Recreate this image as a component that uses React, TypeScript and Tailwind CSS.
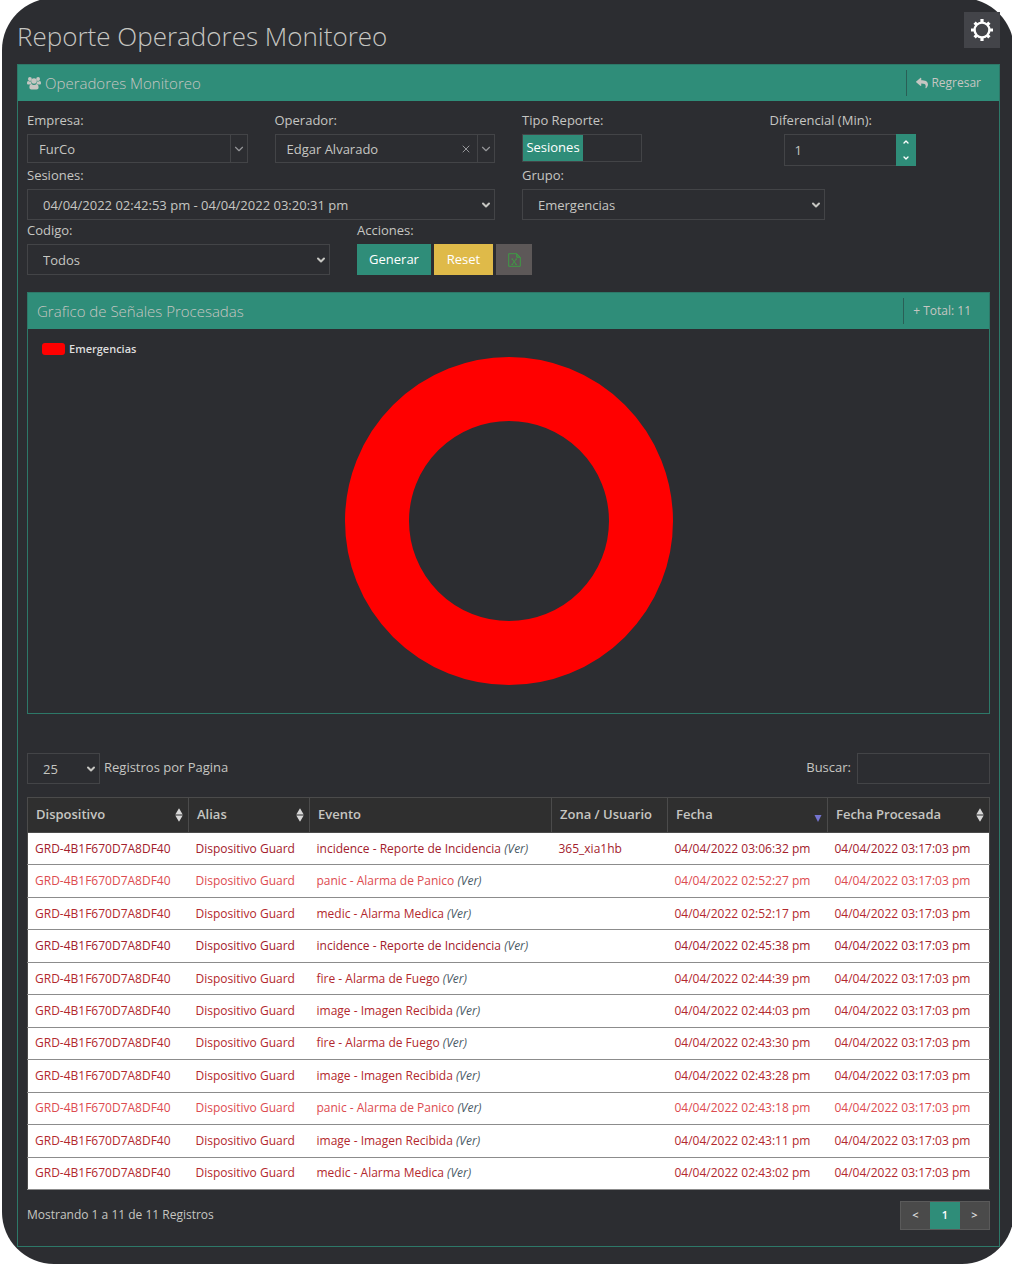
import { useState } from "react"
import type { ReactNode } from "react"
import { ChevronDown, ChevronUp, X } from "lucide-react"
import { FaReply } from "react-icons/fa"

interface Registro {
  evento: string
  zona?: string
  fecha: string
  tono: "oscuro" | "medio" | "claro"
}

const DISPOSITIVO = "GRD-4B1F670D7A8DF40"
const ALIAS = "Dispositivo Guard"
const PROCESADA = "04/04/2022 03:17:03 pm"

const registros: Registro[] = [
  { evento: "incidence - Reporte de Incidencia", zona: "365_xia1hb", fecha: "04/04/2022 03:06:32 pm", tono: "oscuro" },
  { evento: "panic - Alarma de Panico", fecha: "04/04/2022 02:52:27 pm", tono: "claro" },
  { evento: "medic - Alarma Medica", fecha: "04/04/2022 02:52:17 pm", tono: "medio" },
  { evento: "incidence - Reporte de Incidencia", fecha: "04/04/2022 02:45:38 pm", tono: "oscuro" },
  { evento: "fire - Alarma de Fuego", fecha: "04/04/2022 02:44:39 pm", tono: "medio" },
  { evento: "image - Imagen Recibida", fecha: "04/04/2022 02:44:03 pm", tono: "medio" },
  { evento: "fire - Alarma de Fuego", fecha: "04/04/2022 02:43:30 pm", tono: "medio" },
  { evento: "image - Imagen Recibida", fecha: "04/04/2022 02:43:28 pm", tono: "medio" },
  { evento: "panic - Alarma de Panico", fecha: "04/04/2022 02:43:18 pm", tono: "claro" },
  { evento: "image - Imagen Recibida", fecha: "04/04/2022 02:43:11 pm", tono: "medio" },
  { evento: "medic - Alarma Medica", fecha: "04/04/2022 02:43:02 pm", tono: "medio" },
]

const tonos = {
  oscuro: "text-[#a3202c]",
  medio: "text-[#b3282d]",
  claro: "text-[#dd4b4f]",
}

function GearIcon() {
  return (
    <svg viewBox="0 0 24 24" className="size-6" fill="none" stroke="currentColor" aria-hidden="true">
      <circle cx="12" cy="12" r="7.4" strokeWidth="2.4" />
      <g strokeWidth="3.2">
        <path d="M12 1v3.6M12 19.4V23M1 12h3.6M19.4 12H23" />
        <path d="M4.6 4.6l2 2M17.4 17.4l2 2M19.4 4.6l-2 2M6.6 17.4l-2 2" />
      </g>
    </svg>
  )
}

function UsersIcon() {
  return (
    <svg viewBox="0 0 14 13" className="h-[13px] w-[14px]" fill="currentColor" aria-hidden="true">
      <circle cx="2.9" cy="2" r="1.9" />
      <circle cx="11.1" cy="2" r="1.9" />
      <circle cx="7" cy="4" r="2.8" />
      <path d="M0 6.2C0 4.8.5 4 1.2 4c.6.5 1.9.6 2.6.2 0 1 .3 1.8.9 2.5-.9 0-1.6.3-2.1.9H1.3C.5 7.600 0 7 0 6.200z" />
      <path d="M14 6.200C14 4.800 13.500 4 12.800 4c-.6.5-1.900.6-2.600.2 0 1-.3 1.800-.9 2.500.9 0 1.600.3 2.100.9h1.300c.8 0 1.300-.6 1.300-1.400z" />
      <path d="M2.400 10.600c0-2.200.6-3.700 2-3.700.8.7 1.700 1 2.600 1s1.800-.3 2.600-1c1.400 0 2 1.500 2 3.700 0 1.300-.8 2-2 2H4.400c-1.200 0-2-.7-2-2z" />
    </svg>
  )
}

function ExcelIcon() {
  return (
    <svg viewBox="0 0 13 14" className="h-[14px] w-[13px]" fill="none" stroke="currentColor" aria-hidden="true">
      <path d="M.7.7h8l3.600 3.600v9H.7z" />
      <path d="M8.700.7l3.600 3.600H8.700z" fill="currentColor" fillOpacity=".5" />
      <path d="M4.300 6l3.800 5.400M8.300 6l-4 5.400M3.500 6h1.600M7.500 6h1.600M3.500 11.400h1.600M7.300 11.400h1.600" />
    </svg>
  )
}

function SortIcon({ state }: { state: "both" | "desc" }) {
  if (state === "desc") {
    return (
      <svg viewBox="0 0 8 14" className="h-[14px] w-2" aria-hidden="true">
        <path d="M.5 7h7L4 14z" fill="#7474d0" />
      </svg>
    )
  }
  return (
    <svg viewBox="0 0 8 14" className="h-[14px] w-2" fill="#d8d8d8" aria-hidden="true">
      <path d="M.3 6.500h7.400L4 .3zM.3 7.500h7.400L4 13.700z" />
    </svg>
  )
}

interface FieldProps {
  id: string
  label: string
  className: string
  children: ReactNode
}

function Field({ id, label, className, children }: FieldProps) {
  return (
    <div className={`h-[55px] ${className}`}>
      <label htmlFor={id} className="mb-1 block leading-5">
        {label}
      </label>
      {children}
    </div>
  )
}

interface SelectProps {
  id: string
  options: string[]
}

// Plain form select with a bold caret
function NativeSelect({ id, options }: SelectProps) {
  return (
    <div className="relative">
      <select
        id={id}
        className="block h-[31px] w-full appearance-none border border-[#434447] bg-transparent pt-[2px] pr-6 pl-[15px] outline-none"
      >
        {options.map((option) => (
          <option key={option}>{option}</option>
        ))}
      </select>
      <ChevronDown strokeWidth={4} className="pointer-events-none absolute top-[10px] right-[3px] size-3" />
    </div>
  )
}

// Combo with a separated thin caret and an optional clear button
function ComboSelect({ id, options, clearable = false }: SelectProps & { clearable?: boolean }) {
  return (
    <div className="flex h-[29px] border border-[#434447]">
      <select id={id} className="min-w-0 flex-1 appearance-none bg-transparent pt-[2px] pl-[11px] outline-none">
        {options.map((option) => (
          <option key={option}>{option}</option>
        ))}
      </select>
      {clearable && (
        <button type="button" aria-label="Limpiar" className="px-[5px] text-[#96979a]">
          <X strokeWidth={2} className="size-3" />
        </button>
      )}
      <span className="flex w-[17px] items-center justify-center border-l border-[#434447] text-[#96979a]">
        <ChevronDown strokeWidth={2} className="size-[14px]" />
      </span>
    </div>
  )
}

function DonutChart() {
  return (
    <svg viewBox="0 0 328 328" className="mx-auto size-[328px]" role="img" aria-label="Emergencias">
      <circle cx="164" cy="164" r="132" fill="none" stroke="#ff0000" strokeWidth="64" />
    </svg>
  )
}

const columnas: { titulo: string; ancho: string; orden?: "both" | "desc" }[] = [
  { titulo: "Dispositivo", ancho: "w-[161px]", orden: "both" },
  { titulo: "Alias", ancho: "w-[121px]", orden: "both" },
  { titulo: "Evento", ancho: "" },
  { titulo: "Zona / Usuario", ancho: "w-[116px]" },
  { titulo: "Fecha", ancho: "w-[160px]", orden: "desc" },
  { titulo: "Fecha Procesada", ancho: "w-[162px]", orden: "both" },
]

export default function App() {
  const [diferencial, setDiferencial] = useState(1)
  const [buscar, setBuscar] = useState("")

  return (
    <div className="overflow-hidden bg-white pb-[2px] pl-[2px] font-['Open_Sans',sans-serif] text-[13px] text-[#c6c6c2]">
      <div className="-mt-[2px] -mr-[2px] rounded-[52px] bg-[#2c2d31] pt-[2px] pr-[14px] pb-[17px] pl-[15px]">
        <header className="flex h-16 items-start justify-between">
          <h1 className="pt-4 text-[26px] leading-10 font-light">Reporte Operadores Monitoreo</h1>
          <button
            type="button"
            aria-label="Configuración"
            className="mt-3 flex size-9 items-center justify-center bg-[#434449] text-white"
          >
            <GearIcon />
          </button>
        </header>

        <section className="border border-[#2d7868]">
          <div className="flex h-9 items-center justify-between bg-[#2f8d79] px-[9px]">
            <h2 className="flex items-center gap-1 text-[15px] leading-5 font-light">
              <UsersIcon />
              Operadores Monitoreo
            </h2>
            <a href="#" className="flex h-[26px] items-center gap-[3px] border-l border-[#2a5f56] pr-[9px] pl-[9px] text-[12px]">
              <FaReply className="size-3" />
              Regresar
            </a>
          </div>

          <div className="px-[9px] pt-[9px] pb-4">
            {/* Filters */}
            <form className="grid grid-cols-12 gap-x-[27px]" onSubmit={(e) => e.preventDefault()}>
              <Field id="empresa" label="Empresa:" className="col-span-3">
                <ComboSelect id="empresa" options={["FurCo"]} />
              </Field>
              <Field id="operador" label="Operador:" className="col-span-3">
                <ComboSelect id="operador" options={["Edgar Alvarado"]} clearable />
              </Field>
              <Field id="tipo" label="Tipo Reporte:" className="col-span-3">
                <label className="flex h-7 w-[120px] cursor-pointer border border-[#434447]">
                  <input id="tipo" type="checkbox" defaultChecked className="sr-only" />
                  <span className="flex w-[60px] items-center justify-center bg-[#2f8d79] text-white">Sesiones</span>
                </label>
              </Field>
              <Field id="diferencial" label="Diferencial (Min):" className="col-span-3">
                <div className="ml-[14px] flex h-8 w-[132px]">
                  <input
                    id="diferencial"
                    type="text"
                    value={diferencial}
                    onChange={(e) => setDiferencial(Number(e.target.value) || 0)}
                    className="min-w-0 flex-1 border border-r-0 border-[#434447] bg-transparent pt-[2px] pl-[10px] outline-none"
                  />
                  <div className="flex w-5 flex-col bg-[#2f8d79] text-white">
                    <button
                      type="button"
                      aria-label="Aumentar"
                      onClick={() => setDiferencial(diferencial + 1)}
                      className="flex flex-1 items-center justify-center"
                    >
                      <ChevronUp strokeWidth={4} className="size-2" />
                    </button>
                    <button
                      type="button"
                      aria-label="Disminuir"
                      onClick={() => setDiferencial(diferencial - 1)}
                      className="flex flex-1 items-center justify-center"
                    >
                      <ChevronDown strokeWidth={4} className="size-2" />
                    </button>
                  </div>
                </div>
              </Field>

              <Field id="sesiones" label="Sesiones:" className="col-span-6">
                <NativeSelect id="sesiones" options={["04/04/2022 02:42:53 pm - 04/04/2022 03:20:31 pm"]} />
              </Field>
              <Field id="grupo" label="Grupo:" className="col-span-4">
                <NativeSelect id="grupo" options={["Emergencias"]} />
              </Field>

              <Field id="codigo" label="Codigo:" className="col-span-4 col-start-1">
                <NativeSelect id="codigo" options={["Todos"]} />
              </Field>
              <Field id="generar" label="Acciones:" className="col-span-4">
                <div className="flex h-[31px] gap-[3px] text-white">
                  <button id="generar" type="submit" className="w-[74px] bg-[#2f8d79]">
                    Generar
                  </button>
                  <button type="reset" className="w-[59px] bg-[#dfba49]">
                    Reset
                  </button>
                  <button
                    type="button"
                    aria-label="Exportar a Excel"
                    className="flex w-9 items-center justify-center bg-[#5d5858] text-[#3f9a45]"
                  >
                    <ExcelIcon />
                  </button>
                </div>
              </Field>
            </form>

            {/* Chart */}
            <section className="mt-[17px] border border-[#2d7868]">
              <div className="flex h-9 items-center justify-between bg-[#2f8d79] px-[9px]">
                <h2 className="text-[15px] leading-5 font-light">Grafico de Señales Procesadas</h2>
                <span className="flex h-[26px] items-center border-l border-[#2a5f56] pr-[9px] pl-[9px] text-[12px]">
                  + Total: 11
                </span>
              </div>
              <div className="px-[14px] pt-3 pb-7">
                <div className="flex h-4 items-center gap-1 text-[11px] font-semibold text-[#dedede]">
                  <span className="h-3 w-[23px] rounded-[3px] bg-[#ff0000]" />
                  Emergencias
                </div>
                <DonutChart />
              </div>
            </section>

            {/* Table controls */}
            <div className="mt-[39px] flex items-start justify-between">
              <div className="flex gap-1">
                <div className="w-[73px]">
                  <NativeSelect id="pagina" options={["25"]} />
                </div>
                <label htmlFor="pagina" className="leading-7">
                  Registros por Pagina
                </label>
              </div>
              <div className="flex gap-[6px]">
                <label htmlFor="buscar" className="leading-7">
                  Buscar:
                </label>
                <input
                  id="buscar"
                  type="text"
                  value={buscar}
                  onChange={(e) => setBuscar(e.target.value)}
                  className="h-[31px] w-[133px] border border-[#434447] px-2 outline-none"
                />
              </div>
            </div>

            <table className="mt-[13px] h-[393px] w-full table-fixed border-collapse border border-[#4b4b4b] text-left">
              <thead>
                <tr className="h-[35px] bg-[#2f2f2f]">
                  {columnas.map((columna) => (
                    <th key={columna.titulo} className={`border border-[#4b4b4b] pr-[5px] pl-2 font-semibold ${columna.ancho}`}>
                      <div className="flex items-center justify-between">
                        {columna.titulo}
                        {columna.orden && <SortIcon state={columna.orden} />}
                      </div>
                    </th>
                  ))}
                </tr>
              </thead>
              <tbody className="bg-white text-[12px]">
                {registros.map((registro) => (
                  <tr key={registro.fecha} className={`border-b border-[#8c8c8c] ${tonos[registro.tono]}`}>
                    <td className="pl-[7px]">{DISPOSITIVO}</td>
                    <td className="pl-[7px]">{ALIAS}</td>
                    <td className="pl-[7px]">
                      {registro.evento} <em className="text-[#4a5a66]">(Ver)</em>
                    </td>
                    <td className="pl-[7px]">{registro.zona}</td>
                    <td className="pl-[7px]">{registro.fecha}</td>
                    <td className="pl-[7px]">{PROCESADA}</td>
                  </tr>
                ))}
              </tbody>
            </table>

            <footer className="mt-[11px] flex items-start justify-between text-[12px]">
              <p className="leading-7">Mostrando 1 a 11 de 11 Registros</p>
              <nav className="flex h-[29px] border border-[#5a5a5a] bg-[#4a4a4a] text-[11px] font-semibold text-[#e4e4e4]">
                <button type="button" aria-label="Anterior" className="w-[29px]">
                  &lt;
                </button>
                <button type="button" aria-current="page" className="w-[30px] bg-[#2f8d79] text-white">
                  1
                </button>
                <button type="button" aria-label="Siguiente" className="w-[29px]">
                  &gt;
                </button>
              </nav>
            </footer>
          </div>
        </section>
      </div>
    </div>
  )
}
